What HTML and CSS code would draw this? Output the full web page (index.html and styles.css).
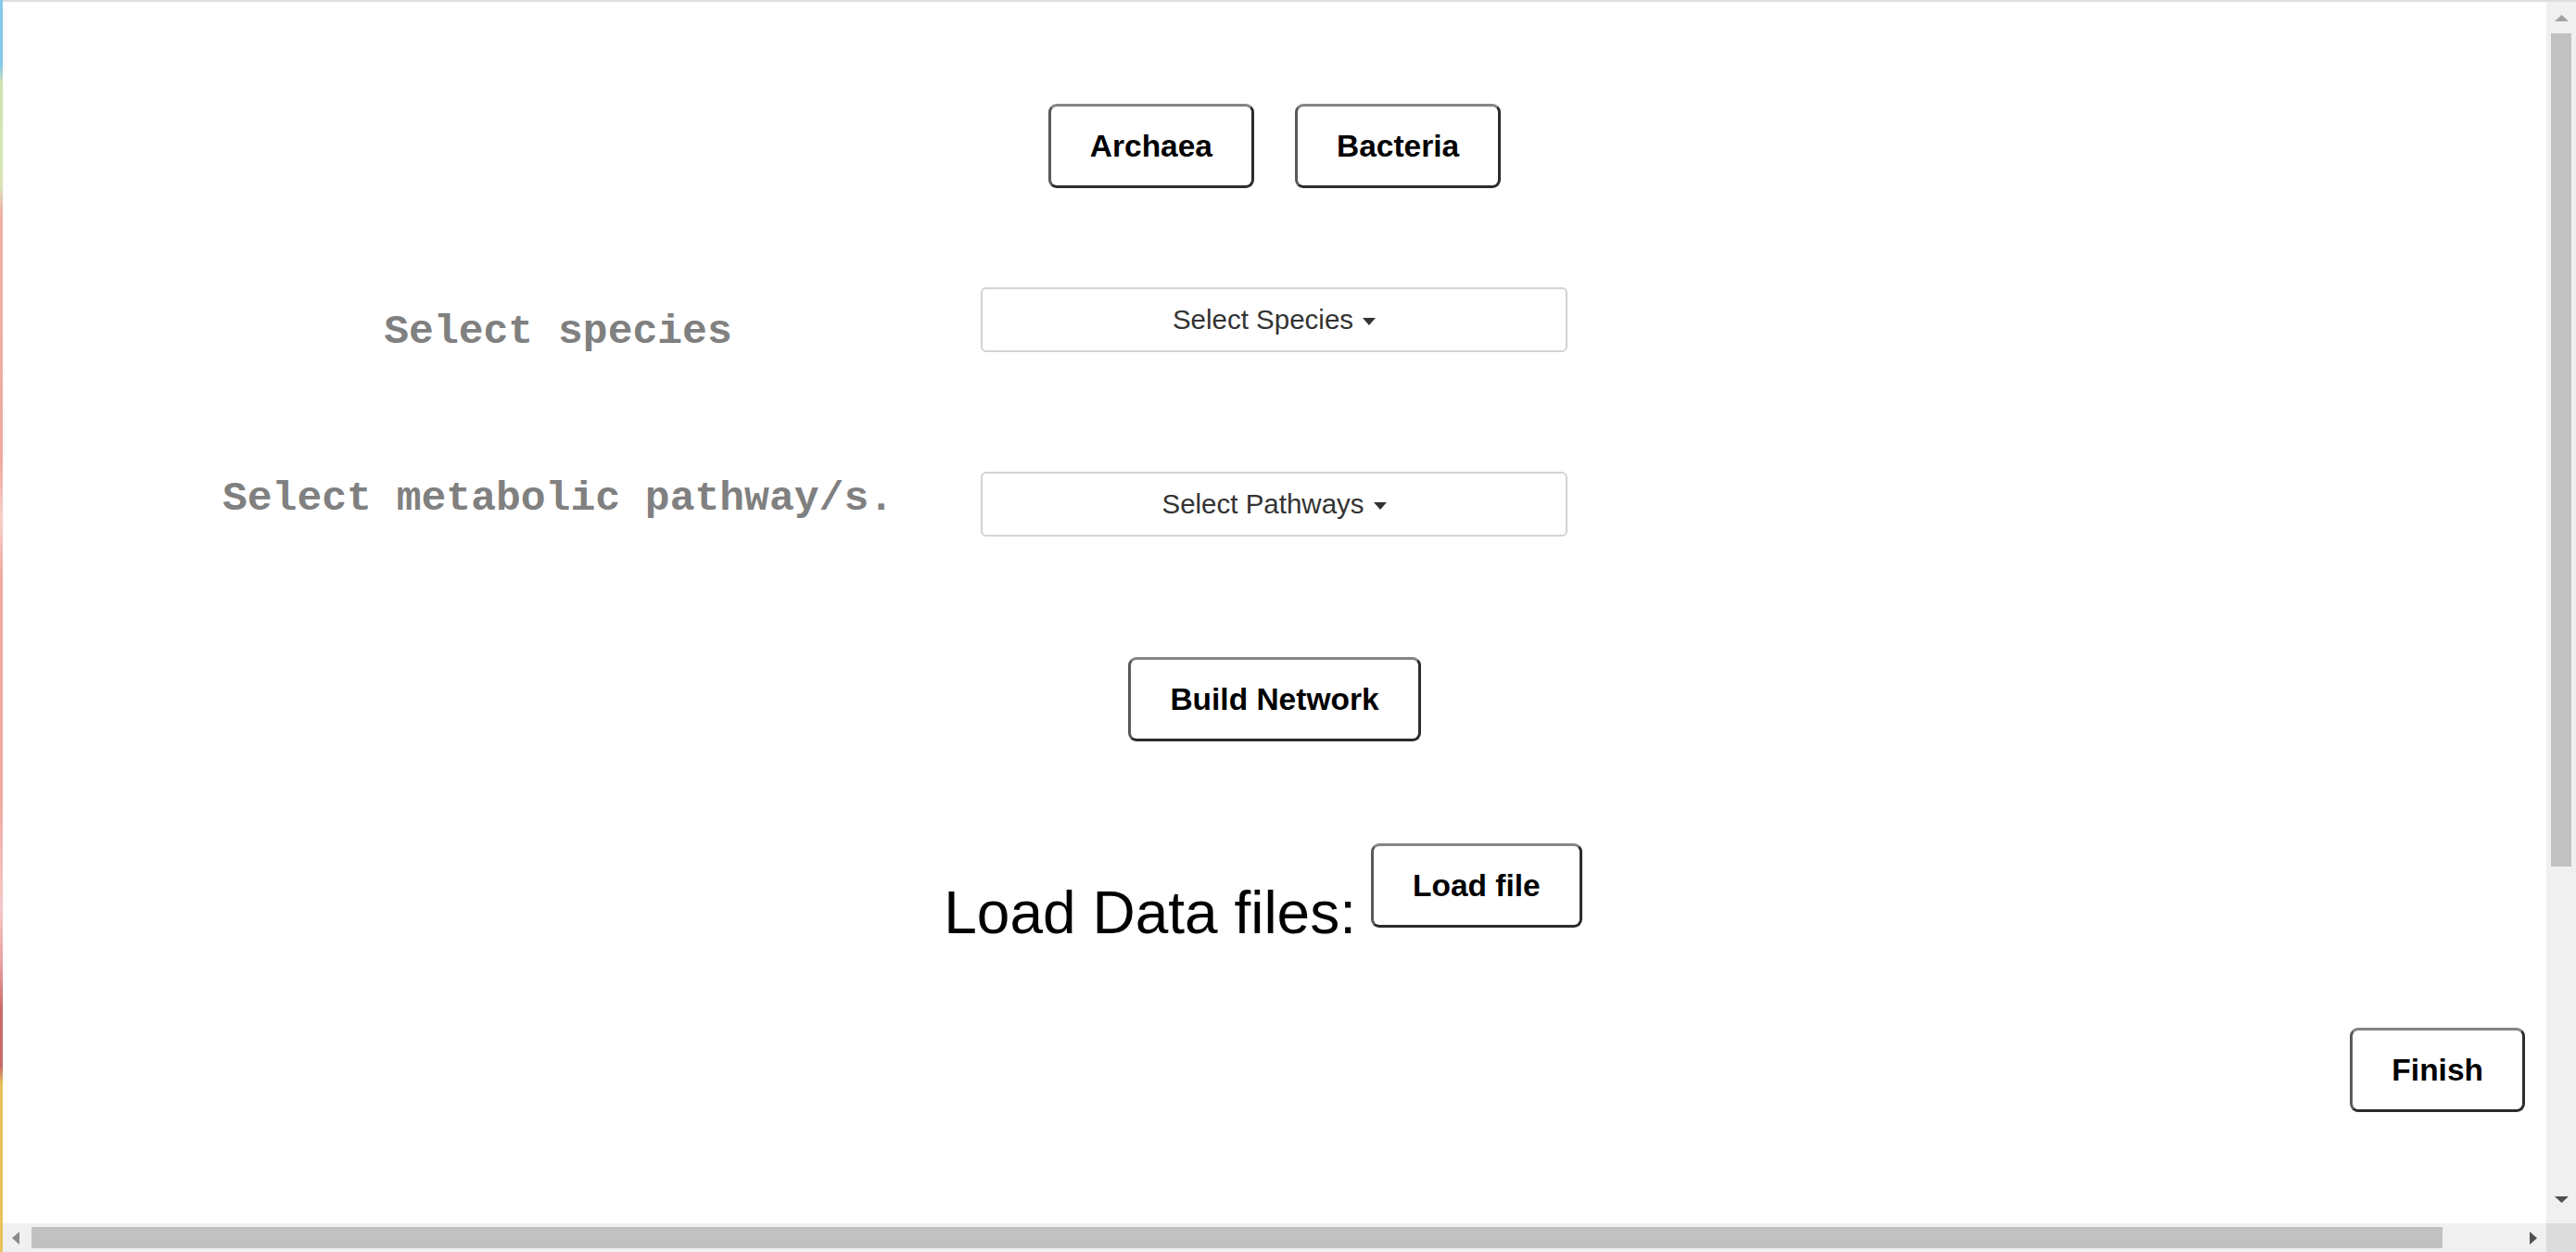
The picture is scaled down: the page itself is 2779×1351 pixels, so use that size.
FILE: index.html
```html
<!DOCTYPE html>
<html lang="en">
<head>
<meta charset="utf-8">
<title>Network builder</title>
<link rel="stylesheet" href="styles.css">
</head>
<body>
<div class="window">
  <div class="edge"></div>
  <div class="frame">
    <main class="page">
      <div class="type-row">
        <button class="btn">Archaea</button>
        <button class="btn">Bacteria</button>
      </div>

      <div class="form-row form-row-species">
        <div class="label label-species">Select species</div>
        <div class="dropdown">Select Species <span class="caret"></span></div>
      </div>

      <div class="form-row form-row-pathways">
        <div class="label label-pathways">Select metabolic pathway/s.</div>
        <div class="dropdown">Select Pathways <span class="caret"></span></div>
      </div>

      <button class="btn build">Build Network</button>

      <div class="load-row">
        <span class="load-label">Load Data files:</span>
        <button class="btn">Load file</button>
      </div>

      <button class="btn finish">Finish</button>
    </main>

    <div class="vscroll">
      <div class="v-up"><svg width="15" height="7" viewBox="0 0 15 7"><polygon points="0,7 7.5,0 15,7" fill="#a3a3a3"/></svg></div>
      <div class="v-thumb"></div>
      <div class="spacer"></div>
      <div class="v-down"><svg width="15" height="7" viewBox="0 0 15 7"><polygon points="0,0 15,0 7.5,7" fill="#505050"/></svg></div>
    </div>

    <div class="hscroll">
      <div class="h-left"><svg width="8" height="14" viewBox="0 0 8 14"><polygon points="8,0 8,14 0,7" fill="#8a8a8a"/></svg></div>
      <div class="h-thumb"></div>
      <div class="spacer"></div>
      <div class="h-right"><svg width="8" height="14" viewBox="0 0 8 14"><polygon points="0,0 8,7 0,14" fill="#505050"/></svg></div>
    </div>

    <div class="corner"></div>
  </div>
</div>
</body>
</html>
```
FILE: styles.css
```css
html, body {
  margin: 0;
  padding: 0;
  background: #ffffff;
}

body {
  overflow: hidden;
}

.window {
  display: flex;
  width: 2779px;
  height: 1351px;
  background: #ffffff;
}

.edge {
  flex: none;
  width: 3px;
  background: linear-gradient(to bottom,
    #86c8e8 0px, #86c8e8 70px,
    #cfe2b0 90px, #d8e4b8 200px,
    #eeb0a8 230px, #eeaaa2 500px,
    #f6d0c8 560px, #eeaaa2 620px,
    #eeaaa2 860px, #f4c8c8 980px,
    #e8a0a0 1040px, #c86a6a 1090px,
    #c86a6a 1150px, #e8c25a 1170px,
    #e8c25a 1351px);
}

.frame {
  flex: 1;
  display: grid;
  grid-template-columns: 1fr 32px;
  grid-template-rows: 1fr 31px;
  border-top: 2px solid #dedede;
  min-width: 0;
}

/* ---------- page content ---------- */

.page {
  grid-column: 1;
  grid-row: 1;
  overflow: hidden;
  display: flex;
  flex-direction: column;
  align-items: center;
  padding-top: 110px;
  box-sizing: border-box;
  font-family: "Liberation Sans", Arial, sans-serif;
}

.type-row {
  display: flex;
  justify-content: center;
  gap: 44px;
}

.btn {
  height: 91px;
  box-sizing: border-box;
  padding: 0 42px;
  background: #ffffff;
  border-style: solid;
  border-width: 3px;
  border-color: #858585 #2c2c2c #2c2c2c #5a5a5a;
  border-radius: 9px;
  font-family: "Liberation Sans", Arial, sans-serif;
  font-weight: bold;
  font-size: 33.5px;
  color: #000000;
  white-space: nowrap;
  cursor: pointer;
}

.form-row {
  align-self: stretch;
  display: grid;
  grid-template-columns: 1055px 633px 1fr;
  align-items: start;
  height: 70px;
}

.form-row-species {
  margin-top: 107px;
}

.form-row-pathways {
  margin-top: 129px;
}

.label {
  padding-left: 143px;
  text-align: center;
  white-space: nowrap;
  font-family: "Liberation Mono", "Courier New", monospace;
  font-weight: bold;
  font-size: 44.7px;
  line-height: 1;
  color: #808080;
}

.label-species {
  padding-top: 26px;
}

.label-pathways {
  padding-top: 7px;
}

.dropdown {
  height: 70px;
  box-sizing: border-box;
  border: 2px solid #d3d3d3;
  border-radius: 6px;
  background: #ffffff;
  display: flex;
  align-items: center;
  justify-content: center;
  gap: 10px;
  font-family: "Liberation Sans", Arial, sans-serif;
  font-size: 29.5px;
  color: #333333;
  white-space: nowrap;
}

.caret {
  display: inline-block;
  width: 0;
  height: 0;
  margin-top: 4px;
  border-top: 8px solid #333333;
  border-left: 7px solid transparent;
  border-right: 7px solid transparent;
}

.build {
  margin-top: 130px;
}

.load-row {
  display: flex;
  align-items: flex-start;
  gap: 16px;
  margin-top: 110px;
  padding-right: 25px;
}

.load-label {
  margin-top: 43px;
  font-family: "Liberation Sans", Arial, sans-serif;
  font-size: 64px;
  line-height: 1;
  color: #000000;
  white-space: nowrap;
}

.finish {
  align-self: flex-end;
  margin-top: 92px;
  margin-right: 23px;
}

/* ---------- scrollbars ---------- */

.spacer {
  flex: 1;
}

.vscroll {
  grid-column: 2;
  grid-row: 1;
  background: #f0f0f0;
  display: flex;
  flex-direction: column;
  align-items: center;
}

.v-up {
  height: 34px;
  display: flex;
  align-items: center;
  justify-content: center;
}

.v-thumb {
  width: 22px;
  height: 899px;
  background: #c1c1c1;
}

.v-down {
  height: 16px;
  margin-bottom: 18px;
  display: flex;
  align-items: center;
  justify-content: center;
}

.hscroll {
  grid-column: 1;
  grid-row: 2;
  background: #f0f0f0;
  display: flex;
  align-items: center;
}

.h-left {
  width: 31px;
  box-sizing: border-box;
  padding-right: 4px;
  display: flex;
  justify-content: center;
  align-items: center;
}

.h-thumb {
  width: 2601px;
  height: 23px;
  background: #c1c1c1;
}

.h-right {
  margin-right: 10px;
  display: flex;
  align-items: center;
}

.corner {
  grid-column: 2;
  grid-row: 2;
  background: #dcdcdc;
}
```
